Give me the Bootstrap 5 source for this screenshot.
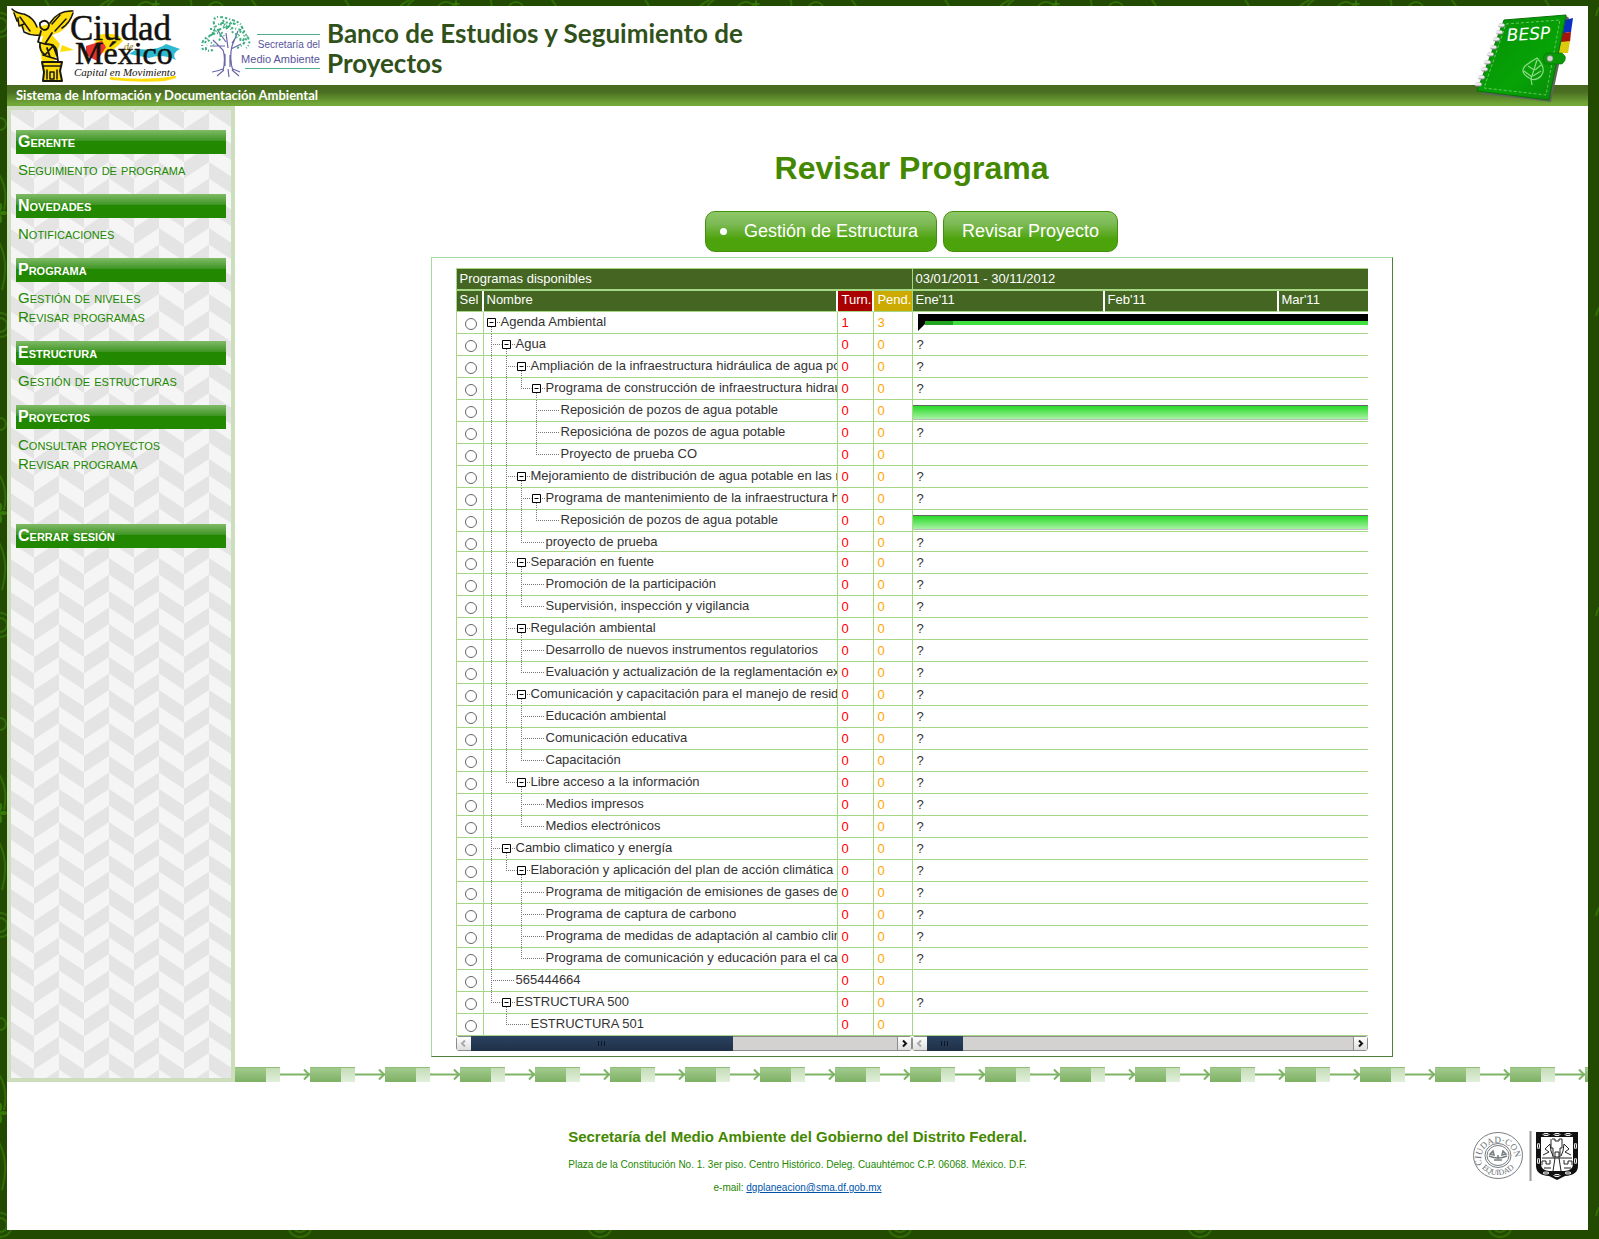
<!DOCTYPE html>
<html lang="es">
<head>
<meta charset="utf-8">
<meta name="viewport" content="width=device-width, initial-scale=1">
<title>Banco de Estudios y Seguimiento de Proyectos</title>
<link href="https://cdn.jsdelivr.net/npm/bootstrap@5.3.0/dist/css/bootstrap.min.css" rel="stylesheet">
<style>
body{font-family:"Liberation Sans",Arial,sans-serif;font-size:13px;color:#333;padding:6px 11px 9px 7px;background:#224a00 url("data:image/svg+xml,%3Csvg xmlns='http://www.w3.org/2000/svg' width='300' height='300' viewBox='0 0 300 300'%3E%3Cg fill='none' stroke='%23306b06' stroke-width='2'%3E%3Ccircle cx='0' cy='25' r='7'/%3E%3Ccircle cx='0' cy='25' r='12'/%3E%3Ccircle cx='300' cy='25' r='7'/%3E%3Ccircle cx='300' cy='25' r='12'/%3E%3Ccircle cx='0' cy='124' r='6'/%3E%3Ccircle cx='300' cy='124' r='7'/%3E%3Cpath d='M-4 170Q9 186 4 210M296 50Q288 85 300 104M-2 240Q10 262 2 290M292 195Q302 215 294 240'/%3E%3Ccircle cx='216' cy='10' r='8'/%3E%3Cpath d='M110 0Q98 4 96 16M116 -2Q104 6 103 18M190 -2Q193 6 190 14M45 0Q52 8 48 16M250 -3L258 9M138 6Q146 -2 154 6'/%3E%3C/g%3E%3Cg fill='%23367a08'%3E%3Cellipse cx='3' cy='213' rx='4' ry='2'/%3E%3Cellipse cx='0' cy='207' rx='2' ry='4'/%3E%3Cellipse cx='0' cy='219' rx='2' ry='4'/%3E%3Cellipse cx='297' cy='163' rx='5' ry='2'/%3E%3Cellipse cx='292' cy='157' rx='2' ry='4'/%3E%3Cellipse cx='292' cy='169' rx='2' ry='4'/%3E%3Cellipse cx='156' cy='4' rx='4' ry='1'/%3E%3Cellipse cx='156' cy='4' rx='1' ry='4'/%3E%3C/g%3E%3C/svg%3E")}
.sheet{background:#fff}
.masthead{height:79px}
.site-title{font:700 26px/30px Lato,"Century Gothic",sans-serif;color:#31511a;max-width:440px;margin:0 0 0 5px;padding-top:12px}
.site-strip{height:21px;background:linear-gradient(#48691f,#4b7022 35%,#72a838 90%);color:#fff;font:700 13px/21px Lato,"Century Gothic",sans-serif;padding-left:9px}
.notebook{top:0;right:8px}
.side{width:228px;border:4px solid #cddebd;padding:20px 5px 0;background:#f5f5f5 url("data:image/svg+xml,%3Csvg xmlns='http://www.w3.org/2000/svg' width='50' height='33' viewBox='0 0 50 33'%3E%3Cg fill='%23e4e4e4'%3E%3Cpath d='M0 0L25 16.500V33L0 16.500ZM25 0L50 -16.500V0L25 16.500ZM25 33L50 16.500V33L25 49.500Z'/%3E%3C/g%3E%3C/svg%3E") -2px 19px}
.side h2,.side .logout{display:block;margin:0;height:24px;padding-left:2px;font:700 small-caps 16px/24px "Liberation Sans",Arial,sans-serif;color:#fff;background:linear-gradient(#80bb68,#3d9422 11px,#228800 11px);text-decoration:none}
.side ul{padding:6px 2px 15px;margin:0}
.side li{height:19px;line-height:19px}
.side li a{font-variant:small-caps;font-size:15px;color:#280;text-decoration:none}
.side .logout{margin-top:36px}
.page-name{font-size:32px;line-height:38px;font-weight:700;color:#480;margin:0 0 24px;padding-top:43px}
.actions{gap:6px;padding-bottom:5px}
.act{height:41px;border:1px solid #44920c;border-radius:10px;background:linear-gradient(#8ec869,#7dba55 30%,#4ca30b 70%);color:#fff;font-size:18px;padding:0 18px}
.act .dot{width:7px;height:7px;border-radius:50%;background:#fff;margin:0 17px 0 -4px}
.frame{max-width:962px;border:1px solid;border-color:#a4dba0 #4f7f3c #4f7f3c #a4dba0;padding:10px 24px 5px}
.pane{flex:1 1 0;min-width:0;overflow:hidden}
.pane table{width:100%;table-layout:fixed;border-collapse:separate;border-spacing:0;border-top:1px solid #a6d785}
.pane th{background:#462;color:#fff;font-weight:400;padding:0 3px;line-height:18px;height:21px;vertical-align:top;white-space:nowrap;border-bottom:1px solid #a6d785;border-right:2px solid #fff}
.pane .over th{height:22px;line-height:19px;border-bottom:2px solid #a6d785;border-right:0}
.pane th:last-child{border-right:0}
.pane table th:first-child,.pane table td:first-child{border-left:1px solid #a6d785}
.pane td{height:22px;padding:0;line-height:20px;vertical-align:top;white-space:nowrap;overflow:hidden;border-bottom:1px solid #a6d785;border-right:1px solid #a6d785}
.pane td:last-child{border-right:0}
.pane tr.low td{height:20px}
.pane .turn{background:#a00}.pane .pend{background:#ca0}
.pane td.n{color:#f00;padding-left:3px}
.pane td.n.p{color:#ffa500}
.val,.task,.cell{height:21px;overflow:hidden}
.val,.task{line-height:22px}
.low .val,.low .task,.low .cell{height:19px}
.cell{display:flex}
.cell svg{flex:none}
.pick{appearance:none;display:block;width:12px;height:12px;border:1px solid #666;border-radius:50%;background:#fff;margin:6px 0 0 8px}
.pick:checked{background:radial-gradient(#333 35%,#fff 40%)}
.task{padding-left:4px}
.bar{height:15px;margin:5px 0 0 -5px;border-top:1px solid #666;border-bottom:1px solid #bbb;background:linear-gradient(#26da26,#a8f2a4)}
.sum{display:flex;height:17px;margin:2px 0 0 1px}
.sum i{flex:1;height:11px;border-top:7px solid #000;background:linear-gradient(90deg,#22a322 28px,#3fdf3f 28px)}
.hs{height:15px;background:#d4d2d0;border:1px solid #8c8c8c;border-radius:3px}
.hs button{width:14px;height:13px;border:0;padding:0;background:linear-gradient(#fff,#dedede);line-height:0}
.hs button:last-child{border-left:1px solid #8c8c8c}
.hs .thumb{height:15px;margin:-1px 0;background:linear-gradient(#2a4260,#1f3046);display:flex;align-items:center;justify-content:center;gap:2px}
.thumb b{width:1px;height:5px;background:#0c1624}
.c-sel{width:28px}.c-turn{width:36px}.c-pend{width:37px}
.c-ene{width:193px}.c-feb{width:174px}
.chain{height:15px;margin-top:10px;background:url("data:image/svg+xml,%3Csvg xmlns='http://www.w3.org/2000/svg' width='75' height='15'%3E%3Cdefs%3E%3ClinearGradient id='a' x2='0' y2='1'%3E%3Cstop stop-color='%23a3cc91'/%3E%3Cstop offset='1' stop-color='%237eb163'/%3E%3C/linearGradient%3E%3ClinearGradient id='b' x2='0' y2='1'%3E%3Cstop stop-color='%23c2dcb4'/%3E%3Cstop offset='1' stop-color='%23e0efda'/%3E%3C/linearGradient%3E%3C/defs%3E%3Crect width='31' height='15' fill='url(%23a)'/%3E%3Crect x='31' width='14' height='15' fill='url(%23b)'/%3E%3Cpath d='M0 .5H45' stroke='%238fbe79'/%3E%3Cpath d='M45 7.500H75' stroke='%237db364' stroke-width='2'/%3E%3Cpath d='M69 2.500L74 7.500L69 12.500' fill='none' stroke='%237db364' stroke-width='2'/%3E%3C/svg%3E")}
.foot{display:grid;grid-template-columns:1fr auto 1fr;padding:44px 10px 34px;color:#280}
.foot h3{font-size:15px;line-height:22px;font-weight:700;color:#480;margin:0 0 8px}
.foot p{font-size:10px;line-height:17px;margin:0 0 6px}
.foot a{color:#05a}
.seals{margin-top:5px}
</style>
<script src="https://cdn.jsdelivr.net/npm/bootstrap@5.3.0/dist/js/bootstrap.bundle.min.js"></script>
</head>
<body>
<div class="sheet">
<header class="position-relative">
<div class="masthead d-flex">
<svg width="186" height="79" viewBox="7 6 186 79" role="img" aria-label="Ciudad de México, Capital en Movimiento">
<g stroke-linejoin="round" stroke-linecap="round">
<path d="M62 45L74 50L60 52Z" fill="#ffdd0a"/>
<path d="M12 10Q18 14 26 15Q33 18 38 27L49 24Q58 10 73 10Q72 24 60 32L52 35L60 44L54 62H42L40 48L43 36Q31 37 27 31Q18 28 17 21Z" fill="#ffdd0a"/>
<path d="M12 9Q16 13 23 14M14 13L17 21M18 18L19 26L24 24M22 25L24 32Q31 36 39 35M24 14Q34 18 37 27M20 17L30 31M73 11Q58 10 50 23M73 13Q70 23 62 28M66 19L55 31M60 15L52 24" fill="none" stroke="#181810" stroke-width="1.500"/>
<path d="M40 23Q45 18 49 24Q49 30 44 30Q39 28 40 23ZM41 31L38 42L45 44L52 33M40 43Q39 51 45 55L53 46M46 44Q57 44 57 54L58 61M43 55L56 59M53 45L57 56M47 48L50 57" fill="none" stroke="#181810" stroke-width="1.800"/>
<path d="M42 62H62L60 71L62 81H43L44 72Z" fill="#ffdd0a" stroke="#181810" stroke-width="2"/>
<path d="M43 66H60M47 70V79M57 70V79M50 72H54V79H50Z" fill="none" stroke="#181810" stroke-width="1.500"/>
</g>
<path d="M98 35Q119 31 123 41L112 51L89 56L94 45Z" fill="#ffdd0a"/>
<path d="M86 46L102 41L106 47L97 61L86 55Z" fill="#e8332e"/>
<path d="M137 49Q158 51 166 44L180 49Q171 53 176 60Q162 53 149 58L129 54Z" fill="#2bbad2"/>
<path d="M110 78Q145 82 176 77L165 80Q140 82 112 79Z" fill="#ffdd0a" stroke="#ffdd0a" stroke-width="2"/>
<g fill="#14120e" font-family="Liberation Serif,serif"><text x="70" y="40" font-size="35" stroke="#14120e" stroke-width=".500">Ciudad</text><text x="75" y="64" font-size="32" stroke="#14120e" stroke-width=".500">México</text><text x="124" y="50" font-size="10" font-style="italic" fill="#8b7410">de</text><text x="74" y="76" font-size="11" font-style="italic">Capital en Movimiento</text></g>
</svg>
<svg width="129" height="79" viewBox="193 6 129 79" role="img" aria-label="Secretaría del Medio Ambiente">
<g fill="none" stroke="#6a68a8" stroke-width="1.200"><path d="M223 71Q226 58 223 50L213 40M233 71Q229 58 232 46L238 31M228 48L226 33M225 46L210 46M231 49L241 44M226 42L218 31M232 43L236 37M223 69Q218 71 212 72M224 70L217 76M228 69L229 77M232 70L239 76M233 69L240 72M225 54V66M230 55V67"/></g>
<g fill="none" stroke="#3dae80" stroke-width="2" stroke-dasharray="2 2 1 2 3 2"><path d="M203 50Q200 40 208 37T214 24T226 18T241 25T247 36T246 48M205 43Q209 34 218 30T233 22M213 50Q203 53 207 45M220 24Q227 27 237 29T243 41M213 34Q224 31 219 41M235 34Q242 35 240 43M215 27Q224 19 238 25M237 48Q246 45 247 34M210 29Q220 28 224 36M223 20L228 31M229 25L233 33M208 40L214 45M241 31L236 38"/></g>
<path d="M257 34.500H320M245 68.500H320" stroke="#4dae8a"/>
<g fill="#57549b" font-family="Liberation Sans,sans-serif"><text x="320" y="48" text-anchor="end" font-size="10">Secretaría del</text><text x="320" y="63" text-anchor="end" font-size="11">Medio Ambiente</text></g>
</svg>
<h1 class="site-title">Banco de Estudios y Seguimiento de Proyectos</h1>
</div>
<div class="site-strip">Sistema de Información y Documentación Ambiental</div>
<svg class="notebook position-absolute" width="106" height="100" viewBox="1474 6 106 100" role="img" aria-label="BESP">
<defs><linearGradient id="nb" x2="1" y2="1"><stop stop-color="#078d07"/><stop offset=".6" stop-color="#06a306"/><stop offset="1" stop-color="#0b850b"/></linearGradient></defs>
<path d="M1482 94L1551 102L1569 18L1565 15Z" fill="#5d6659"/>
<path d="M1565 20L1573 18L1571 32L1563 33Z" fill="#0a30c0"/><path d="M1563 33L1571 32L1570 42L1561 42Z" fill="#a51408"/><path d="M1561 42L1570 41L1568 53L1558 53Z" fill="#dccb0c"/>
<path d="M1504 20L1566 15L1549 100L1477 91Z" fill="url(#nb)" stroke="#087208"/>
<path d="M1506 24L1560 20L1546 95L1484 88Z" fill="none" stroke="#8bdd7f" stroke-width=".700" stroke-dasharray="3 2"/>
<path d="M1546 53H1562Q1569 58 1562 64H1545Q1541 57 1546 53Z" fill="#089808" stroke="#087208" stroke-width=".600"/><circle cx="1550" cy="58.500" r="3" fill="#d5d5d5" stroke="#777" stroke-width=".600"/>
<g stroke="#8c8c8c" stroke-width="4" stroke-linecap="round"><path d="M1500 25.500h3M1498 32.500h3M1495 39.500h3M1492 47.500h3M1489 54.500h3M1486 62.500h3M1483 69.500h3M1480 77.500h3M1477 84.500h3"/></g>
<g stroke="#ececec" stroke-width="3" stroke-linecap="round"><path d="M1499 25h4M1497 32h4M1494 39h4M1491 47h4M1488 54h4M1485 62h4M1482 69h4M1479 77h4M1476 84h4"/></g>
<text x="1507" y="41" font-family="DejaVu Sans,sans-serif" font-size="17" font-style="oblique" fill="#fff" transform="rotate(-3 1507 40)">BESP</text>
<path d="M1532 85L1531 79Q1519 73 1525 66Q1530 62 1537 58Q1547 69 1541 76Q1536 81 1531 79L1537 60M1532 77L1524 71M1533 76L1541 71M1534 70L1528 66M1535 70L1541 65" fill="none" stroke="#8fdb86" stroke-width="1.200"/>
</svg>
</header>
<div class="d-flex">
<nav class="side flex-shrink-0">
<h2>Gerente</h2><ul class="list-unstyled"><li><a href="#">Seguimiento de programa</a></li></ul>
<h2>Novedades</h2><ul class="list-unstyled"><li><a href="#">Notificaciones</a></li></ul>
<h2>Programa</h2><ul class="list-unstyled"><li><a href="#">Gestión de niveles</a></li><li><a href="#">Revisar programas</a></li></ul>
<h2>Estructura</h2><ul class="list-unstyled"><li><a href="#">Gestión de estructuras</a></li></ul>
<h2>Proyectos</h2><ul class="list-unstyled"><li><a href="#">Consultar proyectos</a></li><li><a href="#">Revisar programa</a></li></ul>
<a class="logout" href="#">Cerrar sesión</a>
</nav>
<main class="flex-grow-1 d-flex flex-column overflow-hidden">
<h2 class="page-name text-center">Revisar Programa</h2>
<div class="d-flex justify-content-center actions">
<button class="act d-flex align-items-center" type="button"><span class="dot"></span>Gestión de Estructura</button>
<button class="act" type="button">Revisar Proyecto</button>
</div>
<section class="frame w-100 mx-auto">
<div class="d-flex">
<div class="pane">
<table><colgroup><col class="c-sel"><col><col class="c-turn"><col class="c-pend"></colgroup>
<thead><tr class="over"><th colspan="4">Programas disponibles</th></tr><tr><th>Sel</th><th>Nombre</th><th class="turn">Turn.</th><th class="pend">Pend.</th></tr></thead>
<tbody id="programs"></tbody></table>
<div class="hs d-flex"><button type="button" aria-label="Izquierda"><svg width="7" height="9"><path d="M5 1.500L2 4.500L5 7.500" fill="none" stroke="#aaa" stroke-width="2"/></svg></button><div class="thumb" style="width:262px"><b></b><b></b><b></b></div><button class="ms-auto" type="button" aria-label="Derecha"><svg width="7" height="9"><path d="M2 1.500L5 4.500L2 7.500" fill="none" stroke="#111" stroke-width="2"/></svg></button></div>
</div>
<div class="pane">
<table><colgroup><col class="c-ene"><col class="c-feb"><col></colgroup>
<thead><tr class="over"><th colspan="3">03/01/2011 - 30/11/2012</th></tr><tr><th>Ene'11</th><th>Feb'11</th><th>Mar'11</th></tr></thead>
<tbody id="schedule"></tbody></table>
<div class="hs d-flex"><button type="button" aria-label="Izquierda"><svg width="7" height="9"><path d="M5 1.500L2 4.500L5 7.500" fill="none" stroke="#aaa" stroke-width="2"/></svg></button><div class="thumb" style="width:36px"><b></b><b></b><b></b></div><button class="ms-auto" type="button" aria-label="Derecha"><svg width="7" height="9"><path d="M2 1.500L5 4.500L2 7.500" fill="none" stroke="#111" stroke-width="2"/></svg></button></div>
</div>
</div>
</section>
<div class="chain"></div>
</main>
</div>
<footer class="foot text-center">
<div></div>
<div><h3>Secretaría del Medio Ambiente del Gobierno del Distrito Federal.</h3>
<p>Plaza de la Constitución No. 1. 3er piso. Centro Histórico. Deleg. Cuauhtémoc C.P. 06068. México. D.F.</p>
<p class="mb-0">e-mail: <a href="mailto:dgplaneacion@sma.df.gob.mx">dgplaneacion@sma.df.gob.mx</a></p></div>
<div class="text-end seals">
<svg width="106" height="50" viewBox="0 0 106 50" role="img" aria-label="Ciudad con equidad">
<g fill="none" stroke="#777d80"><ellipse cx="26" cy="24.500" rx="24.500" ry="23"/><ellipse cx="26" cy="24.500" rx="13" ry="12"/><ellipse cx="26" cy="24.500" rx="11" ry="10"/><path d="M17 25Q26 29 35 25M26 24V28M22 29H30M18 23l3-3 1 4zM34 23l-3-3-1 4z" stroke-width="1.500"/></g>
<path id="ring" d="M13 38A17 16 0 1 1 39 38" fill="none"/><path id="low" d="M6 31A21.500 20.500 0 0 0 46 31" fill="none"/>
<g font-family="Liberation Serif,serif" font-size="9" fill="#666c70"><text><textPath href="#ring" startOffset="5">CIUDAD·CON</textPath></text><text font-size="8"><textPath href="#low" startOffset="7">EQUIDAD</textPath></text></g>
<path d="M58.500 0V50" stroke="#999" stroke-width="2"/>
<path d="M64 1H106V35Q106 44 93 45L85 49L77 45Q64 44 64 35Z" fill="#111"/>
<path d="M69 6H101V33Q101 39 93 40H77Q69 39 69 33Z" fill="#fff"/>
<g fill="none" stroke="#222"><path d="M80 8h3v2h4V8h3v9h-2v9h-7v-9h-2V8M83 26v-5h4v5M70 27h30M70 34v-4h4v3h4v-4M100 34v-4h-4v3h-4v-4M81 40l2-13M89 40l-2-13M71 24l6-3-4-3 5-5 1 7 2 5M99 24l-6-3 4-3-5-5-1 7-2 5M72 37h7M92 37h7"/></g>
<g fill="none" stroke="#fff"><ellipse cx="74" cy="3.500" rx="3" ry="1"/><ellipse cx="85" cy="3.500" rx="3" ry="1"/><ellipse cx="96" cy="3.500" rx="3" ry="1"/><ellipse cx="66.500" cy="15" rx="1" ry="3"/><ellipse cx="66.500" cy="30" rx="1" ry="3"/><ellipse cx="103.500" cy="15" rx="1" ry="3"/><ellipse cx="103.500" cy="30" rx="1" ry="3"/><ellipse cx="74" cy="42" rx="3" ry="1"/><ellipse cx="85" cy="44.500" rx="3" ry="1"/><ellipse cx="96" cy="42" rx="3" ry="1"/></g>
</svg></div>
</footer>
</div>
<script>
// level, name, timeline content: "?" unknown, "bar" task, "sum" summary, "" none
const items = [
[0,"Agenda Ambiental","sum"],
[1,"Agua","?"],
[2,"Ampliación de la infraestructura hidráulica de agua potable","?"],
[3,"Programa de construcción de infraestructura hidraulica","?"],
[4,"Reposición de pozos de agua potable","bar"],
[4,"Reposicióna de pozos de agua potable","?"],
[4,"Proyecto de prueba CO",""],
[2,"Mejoramiento de distribución de agua potable en las redes","?"],
[3,"Programa de mantenimiento de la infraestructura hidraulica","?"],
[4,"Reposición de pozos de agua potable","bar"],
[3,"proyecto de prueba","?"],
[2,"Separación en fuente","?"],
[3,"Promoción de la participación","?"],
[3,"Supervisión, inspección y vigilancia","?"],
[2,"Regulación ambiental","?"],
[3,"Desarrollo de nuevos instrumentos regulatorios","?"],
[3,"Evaluación y actualización de la reglamentación existente","?"],
[2,"Comunicación y capacitación para el manejo de residuos","?"],
[3,"Educación ambiental","?"],
[3,"Comunicación educativa","?"],
[3,"Capacitación","?"],
[2,"Libre acceso a la información","?"],
[3,"Medios impresos","?"],
[3,"Medios electrónicos","?"],
[1,"Cambio climatico y energía","?"],
[2,"Elaboración y aplicación del plan de acción climática","?"],
[3,"Programa de mitigación de emisiones de gases de efecto","?"],
[3,"Programa de captura de carbono","?"],
[3,"Programa de medidas de adaptación al cambio climático","?"],
[3,"Programa de comunicación y educación para el cambio","?"],
[1,"565444664",""],
[1,"ESTRUCTURA 500","?"],
[2,"ESTRUCTURA 501",""]
];
// true when another item of the given level follows before the branch closes
const continues = (i, level) => {
  for (let j = i + 1; j < items.length && items[j][0] >= level; j++)
    if (items[j][0] === level) return true;
  return false;
};
const X = k => 7.5 + 15 * k;
let left = "", right = "";
items.forEach(([level, name, kind], i) => {
  const parent = i + 1 < items.length && items[i + 1][0] > level;
  let d = "";
  for (let k = 0; k < level - 1; k++) if (continues(i, k + 1)) d += `M${X(k)} 0V22`;
  if (level) d += `M${X(level - 1)} 0V${continues(i, level) ? 22 : 10}M${X(level - 1) - .5} 10.5H${parent ? X(level) - 5 : X(level) + 8}`;
  if (parent) d += `M${X(level)} 15V22M${X(level) + 5.5} 10.5H${X(level) + 9}`;
  const box = parent ? `<path d="M${X(level) - 4} 6.5h8v8h-8zM${X(level) - 2} 10.5h4" fill="none" stroke="#000"/>` : "";
  const w = 17 + 15 * level;
  const low = i === 10 ? ' class="low"' : "";
  left += `<tr${low}><td><input class="pick" type="radio" name="sel" aria-label="${name}"></td><td><div class="cell"><svg width="${w}" height="22"><path d="${d}" fill="none" stroke="#777" stroke-dasharray="1 1"/>${box}</svg><span>${name}</span></div></td><td class="n"><div class="val">${i ? 0 : 1}</div></td><td class="n p"><div class="val">${i ? 0 : 3}</div></td></tr>`;
  const body = kind === "bar" ? '<div class="bar"></div>' : kind === "sum" ? '<div class="sum"><svg width="7" height="17"><path d="M0 0H7V10L0 17Z"/></svg><i></i></div>' : kind;
  right += `<tr${low}><td colspan="3"><div class="task">${body}</div></td></tr>`;
});
document.getElementById("programs").innerHTML = left;
document.getElementById("schedule").innerHTML = right;
</script>
</body>
</html>
